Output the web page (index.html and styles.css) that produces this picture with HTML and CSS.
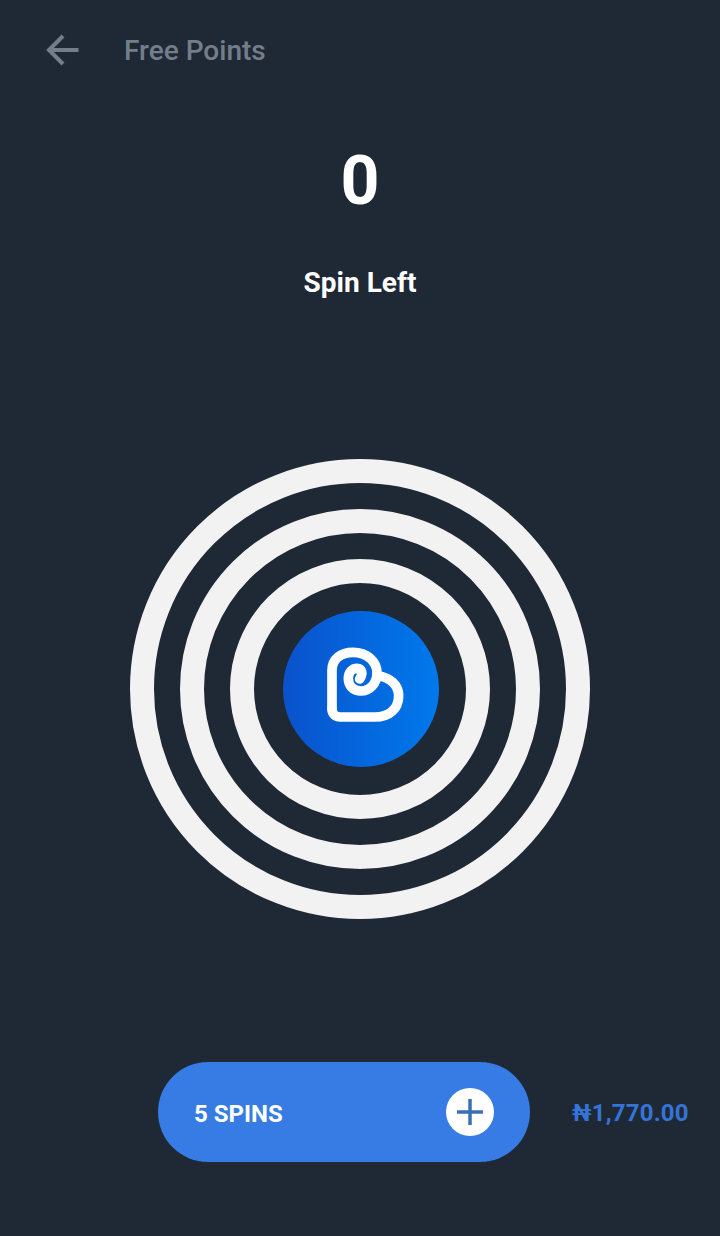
FILE: index.html
```html
<!DOCTYPE html>
<html lang="en">
<head>
    <meta charset="UTF-8">
    <meta name="viewport" content="width=device-width, initial-scale=1.0">
    <title>Free Points</title>
    <link rel="stylesheet" href="styles.css">
</head>
<body>
    <header class="top-bar">
        <svg class="back-icon" viewBox="0 0 36 36" aria-hidden="true">
            <path d="M33.5 18H4M18 4L4 18L18 32"></path>
        </svg>
        <h1>Free Points</h1>
    </header>

    <main>
        <div class="spin-count">0</div>
        <div class="spin-label">Spin Left</div>

        <!-- Spin wheel -->
        <div class="wheel">
            <div class="ring">
                <div class="ring">
                    <div class="ring ring-last">
                        <div class="wheel-center">
                            <svg class="logo" viewBox="40 32 468 468" aria-hidden="true">
                                <path d="M187 325V210C187 176 214 156 250 156C292 156 322 184 322 218C322 250 300 272 274 272C250 272 236 256 236 234C236 216 248 204 262 204C276 204 282 218 270 236"></path>
                                <path d="M326 226C362 232 387 254 387 286C387 326 358 350 316 350H212C196 350 187 340 187 325"></path>
                            </svg>
                        </div>
                    </div>
                </div>
            </div>
        </div>
    </main>

    <footer class="buy-row">
        <button type="button" class="buy-button">
            <span class="buy-text">5 SPINS</span>
            <span class="plus-circle">
                <svg viewBox="0 0 28 28" aria-hidden="true">
                    <path d="M14 1V27M1 14H27"></path>
                </svg>
            </span>
        </button>
        <div class="price">₦1,770.00</div>
    </footer>
</body>
</html>
```

FILE: styles.css
```css
body {
    font-family: Roboto, "Liberation Sans", sans-serif;
    background-color: #1f2935;
    margin: 0;
    padding: 0;
    height: 1236px;
    overflow: hidden;
}
.top-bar {
    display: flex;
    align-items: center;
    height: 100px;
    padding-left: 45px;
    box-sizing: border-box;
}
.back-icon {
    width: 36px;
    height: 36px;
    margin-right: 43px;
}
.back-icon path {
    fill: none;
    stroke: #747e8a;
    stroke-width: 4;
}
.top-bar h1 {
    margin: 0;
    font-size: 28px;
    font-weight: 500;
    color: #747e8a;
}
main {
    display: flex;
    flex-direction: column;
    align-items: center;
}
.spin-count {
    margin-top: 41px;
    font-size: 68px;
    line-height: 80px;
    font-weight: 700;
    color: white;
}
.spin-label {
    margin-top: 42px;
    font-size: 28px;
    line-height: 40px;
    font-weight: 700;
    color: white;
}
.wheel {
    margin-top: 156px;
}
.ring {
    border: 24px solid #f2f2f2;
    border-radius: 50%;
    padding: 26px;
}
.ring-last {
    padding: 28px 27px 28px 29px;
}
.wheel > .ring {
    width: 460px;
    height: 460px;
    box-sizing: border-box;
}
.wheel-center {
    width: 156px;
    height: 156px;
    border-radius: 50%;
    background: linear-gradient(90deg, #0a52cc, #0079ec);
}
.logo {
    display: block;
    width: 156px;
    height: 156px;
}
.logo path {
    fill: none;
    stroke: white;
    stroke-width: 29;
    stroke-linecap: round;
    stroke-linejoin: round;
}
.buy-row {
    display: flex;
    align-items: center;
    margin-top: 143px;
    padding-left: 158px;
}
.buy-button {
    display: flex;
    align-items: center;
    justify-content: space-between;
    width: 372px;
    height: 100px;
    padding: 0 36px;
    border: none;
    border-radius: 50px;
    background-color: #367ce4;
    color: white;
    font-family: inherit;
    font-size: 24px;
    font-weight: 700;
}
.buy-text {
    padding-top: 3px;
}
.plus-circle {
    display: flex;
    align-items: center;
    justify-content: center;
    width: 48px;
    height: 48px;
    border-radius: 50%;
    background: white;
}
.plus-circle svg {
    width: 28px;
    height: 28px;
}
.plus-circle path {
    fill: none;
    stroke: #3b6fb8;
    stroke-width: 3.5;
}
.price {
    margin-left: 42px;
    padding-top: 2px;
    font-size: 24px;
    font-weight: 700;
    letter-spacing: 0.2px;
    color: #3574d6;
}
```
